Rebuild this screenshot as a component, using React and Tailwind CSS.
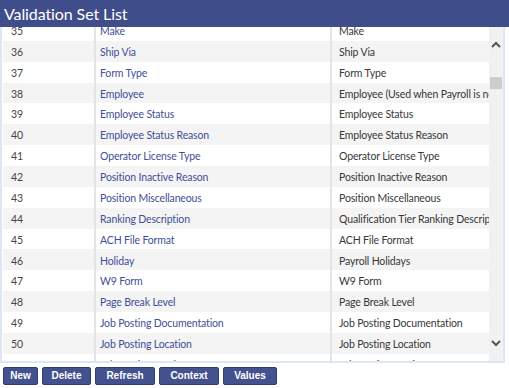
import React from "react";

const rows = [
  [35, "Make", "Make"],
  [36, "Ship Via", "Ship Via"],
  [37, "Form Type", "Form Type"],
  [38, "Employee", "Employee (Used when Payroll is not used)"],
  [39, "Employee Status", "Employee Status"],
  [40, "Employee Status Reason", "Employee Status Reason"],
  [41, "Operator License Type", "Operator License Type"],
  [42, "Position Inactive Reason", "Position Inactive Reason"],
  [43, "Position Miscellaneous", "Position Miscellaneous"],
  [44, "Ranking Description", "Qualification Tier Ranking Description"],
  [45, "ACH File Format", "ACH File Format"],
  [46, "Holiday", "Payroll Holidays"],
  [47, "W9 Form", "W9 Form"],
  [48, "Page Break Level", "Page Break Level"],
  [49, "Job Posting Documentation", "Job Posting Documentation"],
  [50, "Job Posting Location", "Job Posting Location"],
  [51, "Job Posting Posting Date Type", "Job Posting Posting Date Type"],
];

const buttons = [
  ["New", "w-[35px]"],
  ["Delete", "w-[49px]"],
  ["Refresh", "w-[60px]"],
  ["Context", "w-[60px]"],
  ["Values", "w-[54px]"],
];

export default function App() {
  return (
    <div
      className="w-[509px] h-[388px] bg-white overflow-hidden flex flex-col"
      style={{ fontFamily: 'Lato, "Open Sans", sans-serif' }}
    >
      <div className="h-[27px] bg-[#3f4e8a] text-white text-[16px] tracking-[-0.1px] leading-[27px] pl-[4px] shrink-0">
        Validation Set List
      </div>
      <div className="w-[505px] h-[336px] border-l-2 border-r-2 border-b-2 border-[#dde6f3] flex shrink-0">
        <div className="flex-1 overflow-hidden pl-[1px]">
          <div className="-mt-[7px]">
            {rows.map(([n, a, b]) => (
              <div
                key={n}
                className={`h-[20.86px] flex items-center text-[10.5px] tracking-[-0.15px] whitespace-nowrap ${
                  n % 2 === 0 ? "bg-[#f4f4f4]" : "bg-white"
                }`}
              >
                <div className="w-[93px] h-full flex items-center pt-[3px] pl-[8px] text-[#444] border-r-2 border-[#e4e4e4]">
                  {n}
                </div>
                <div className="w-[236px] h-full flex items-center pt-[3px] pl-[4px] text-[#3f4f99] border-r-2 border-[#e4e4e4] overflow-hidden">
                  {a}
                </div>
                <div className="flex-1 h-full flex items-center pt-[3px] pl-[7px] text-[#383838] overflow-hidden">
                  {b}
                </div>
              </div>
            ))}
          </div>
        </div>
        <div className="w-[14px] bg-[#f1f1f1] relative shrink-0">
          <svg className="absolute left-[2px] top-[14px]" width="10" height="8" viewBox="0 0 10 8">
            <path d="M1 6 L5 2 L9 6" fill="none" stroke="#555" strokeWidth="2" />
          </svg>
          <div className="absolute left-[1px] top-[50px] w-[12px] h-[12px] bg-[#cdcdcd]" />
          <svg className="absolute left-[2px] top-[312px]" width="10" height="8" viewBox="0 0 10 8">
            <path d="M1 2 L5 6 L9 2" fill="none" stroke="#555" strokeWidth="2" />
          </svg>
        </div>
      </div>
      <div className="flex gap-[4px] pl-[3px] pt-[4px]">
        {buttons.map(([t, w]) => (
          <div
            key={t}
            className={`${w} h-[18px] bg-[#43528e] border border-[#2f3d75] rounded-[2px] text-white font-bold text-[10px] leading-[16px] text-center`}
            style={{ fontFamily: '"Liberation Sans", Arial, sans-serif' }}
          >
            {t}
          </div>
        ))}
      </div>
    </div>
  );
}
